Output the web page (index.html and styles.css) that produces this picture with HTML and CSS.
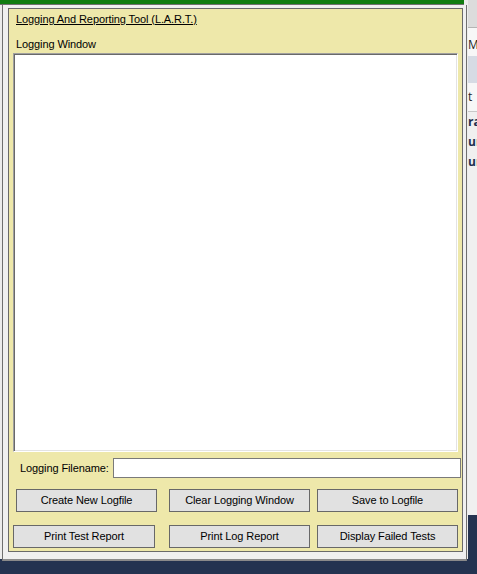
FILE: index.html
```html
<!DOCTYPE html>
<html>
<head>
<meta charset="utf-8">
<link rel="stylesheet" href="styles.css">
</head>
<body>
<div class="desktop">
  <div class="side-window">
    <div class="side-head"></div>
    <div class="side-item side-me">Menu</div>
    <div class="side-sel"></div>
    <div class="side-item side-t">t</div>
    <div class="side-bold">rate</div>
    <div class="side-bold">ure</div>
    <div class="side-bold">ure</div>
  </div>
  <div class="main-window">
    <div class="greenbar"></div>
    <div class="frame">
      <div class="panel">
        <a class="title" href="#">Logging And Reporting Tool (L.A.R.T.)</a>
        <div class="label">Logging Window</div>
        <div class="log"></div>
        <div class="file-row">
          <span class="file-label">Logging Filename:</span>
          <div class="file-input"></div>
        </div>
        <div class="btn-row row1">
          <div class="btn b1">Create New Logfile</div>
          <div class="btn b2">Clear Logging Window</div>
          <div class="btn b3">Save to Logfile</div>
        </div>
        <div class="btn-row row2">
          <div class="btn b1">Print Test Report</div>
          <div class="btn b2">Print Log Report</div>
          <div class="btn b3">Display Failed Tests</div>
        </div>
      </div>
    </div>
  </div>
</div>
</body>
</html>
```

FILE: styles.css
```css
html, body {
  margin: 0;
  padding: 0;
}
body {
  background: #243350;
  width: 477px;
  height: 574px;
  overflow: hidden;
  font-family: "Liberation Sans", Arial, sans-serif;
  font-size: 11px;
  letter-spacing: -0.1px;
  color: #000;
}
.desktop {
  position: relative;
  width: 477px;
  height: 574px;
}
.main-window {
  position: absolute;
  left: 0;
  top: 0;
  width: 468px;
  height: 559px;
  background: #ececec;
  z-index: 2;
}
.greenbar {
  height: 4px;
  width: 464px;
  background: #107c10;
  border-bottom: 1px solid #6f6f6f;
}
.frame {
  margin-left: 2px;
  width: 463px;
  height: 551px;
  border-left: 1px solid #6f6f6f;
  border-right: 1px solid #6f6f6f;
  border-bottom: 2px solid #8a8a8a;
  background: #f0f0f0;
  padding-top: 3px;
  box-sizing: content-box;
}
.panel {
  margin-left: 5px;
  width: 453px;
  height: 542px;
  border: 1px solid #6a6a6a;
  background: #eee8aa;
  display: flex;
  flex-direction: column;
}
.title {
  margin: 4px 0 0 7px;
  line-height: 13px;
  height: 13px;
  color: #000;
  text-decoration: underline;
  align-self: flex-start;
}
.label {
  margin: 12px 0 0 7px;
  line-height: 13px;
  height: 13px;
}
.log {
  margin: 2px 0 0 4px;
  width: 443px;
  height: 397px;
  background: #fff;
  border-top: 1px solid #a0a0a0;
  border-left: 1px solid #a0a0a0;
  border-bottom: 1px solid #fff;
  border-right: 1px solid #fff;
  box-shadow: inset 1px 1px 0 #696969, inset -1px -1px 0 #e3e3e3;
}
.file-row {
  margin-top: 6px;
  height: 20px;
  display: flex;
  align-items: center;
}
.file-label {
  margin-left: 11px;
  width: 93px;
  line-height: 13px;
}
.file-input {
  width: 346px;
  height: 18px;
  border: 1px solid #7a7a7a;
  background: #fff;
}
.btn-row {
  display: flex;
  height: 23px;
}
.row1 {
  margin-top: 11px;
}
.row2 {
  margin-top: 13px;
}
.btn {
  box-sizing: border-box;
  height: 23px;
  width: 141px;
  border: 1px solid #686868;
  background: #e1e1e1;
  display: flex;
  align-items: center;
  justify-content: center;
  line-height: 13px;
}
.row1 .b1 { margin-left: 7px; }
.row1 .b2 { margin-left: 12px; }
.row1 .b3 { margin-left: 7px; }
.row2 .b1 { margin-left: 4px; width: 142px; }
.row2 .b2 { margin-left: 14px; }
.row2 .b3 { margin-left: 7px; }

.side-window {
  position: absolute;
  left: 467px;
  top: 0;
  width: 10px;
  height: 515px;
  background: #f0f0f0;
  overflow: hidden;
  z-index: 1;
  font-family: "Open Sans", "Noto Sans", sans-serif;
  font-size: 12px;
  letter-spacing: 0;
  color: #1e1e1e;
}
.side-head {
  height: 27px;
  background: #dcdcdc;
  border-bottom: 1px solid #b4b4b4;
}
.side-item {
  padding-left: 1px;
  height: 28px;
  line-height: 28px;
  background: #f7f7f7;
  white-space: nowrap;
}
.side-me {
  line-height: 34px;
}
.side-sel {
  height: 27px;
  background: #d6dbe4;
}
.side-t {
  border-bottom: 1px solid #c8c8c8;
}
.side-bold {
  padding-left: 1px;
  height: 20px;
  line-height: 20px;
  font-weight: bold;
  color: #1e3150;
  white-space: nowrap;
}
```
